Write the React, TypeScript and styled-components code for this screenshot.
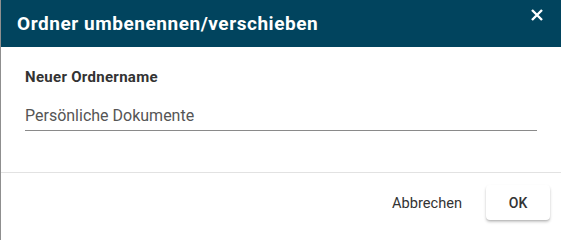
import React, { useState } from "react";
import styled, { createGlobalStyle } from "styled-components";

const GlobalStyle = createGlobalStyle`
  html, body {
    margin: 0;
    padding: 0;
    background: #8f8f8f;
  }
  body {
    font-family: Roboto, "Noto Sans", sans-serif;
    overflow: hidden;
  }
`;

const Backdrop = styled.div`
  padding-left: 1px;
  height: 100vh;
  overflow: hidden;
`;

const Dialog = styled.div`
  background: #fff;
  height: 100%;
  display: flex;
  flex-direction: column;
`;

const Header = styled.div`
  height: 47px;
  flex-shrink: 0;
  background: #01445e;
  display: flex;
  align-items: center;
  justify-content: space-between;
  padding: 0 14px 0 16px;
`;

const Title = styled.h2`
  margin: 0;
  color: #fff;
  font-size: 19px;
  font-weight: 700;
  letter-spacing: 0.55px;
`;

const CloseButton = styled.button`
  align-self: flex-start;
  margin-top: 5px;
  border: none;
  background: transparent;
  padding: 0;
  width: 20px;
  height: 20px;
  display: flex;
  cursor: pointer;
  color: #fff;
`;

const Content = styled.div`
  padding: 20px 24px 41px 24px;
`;

const Label = styled.label`
  display: block;
  font-size: 15px;
  line-height: 20px;
  font-weight: 700;
  letter-spacing: 0.3px;
  color: #333;
`;

const Input = styled.input`
  display: block;
  box-sizing: content-box;
  width: 100%;
  margin-top: 15px;
  padding: 4px 0;
  height: 20px;
  border: none;
  border-bottom: 1px solid #8a8a8a;
  outline: none;
  font-family: Roboto, sans-serif;
  font-size: 16px;
  line-height: 20px;
  color: #555;
  background: transparent;
`;

const Footer = styled.div`
  border-top: 1px solid #e2e2e2;
  display: flex;
  justify-content: flex-end;
  align-items: center;
  gap: 16px;
  padding: 12px 11px 0 0;
`;

const Button = styled.button<{ $raised?: boolean }>`
  font-family: Roboto, sans-serif;
  font-size: ${(p) => (p.$raised ? "14px" : "14.6px")};
  font-weight: ${(p) => (p.$raised ? 500 : 400)};
  color: #333;
  height: 35px;
  min-width: ${(p) => (p.$raised ? "64px" : "auto")};
  padding: 0 8px;
  border: none;
  border-radius: 4px;
  background: #fff;
  cursor: pointer;
  box-shadow: ${(p) =>
    p.$raised
      ? "0 2px 3px rgba(0,0,0,0.22), 0 1px 1px rgba(0,0,0,0.08)"
      : "none"};
`;

const App: React.FC = () => {
  const [name, setName] = useState("Persönliche Dokumente");
  return (
    <>
      <GlobalStyle />
      <Backdrop>
        <Dialog>
          <Header>
            <Title>Ordner umbenennen/verschieben</Title>
            <CloseButton aria-label="Schließen">
              <svg
                width="20"
                height="20"
                viewBox="0 0 24 24"
                fill="none"
                stroke="currentColor"
                strokeWidth="2.9"
              >
                <path d="M6 6L18 18M18 6L6 18" />
              </svg>
            </CloseButton>
          </Header>
          <Content>
            <Label htmlFor="ordnername">Neuer Ordnername</Label>
            <Input
              id="ordnername"
              value={name}
              onChange={(e) => setName(e.target.value)}
            />
          </Content>
          <Footer>
            <Button>Abbrechen</Button>
            <Button $raised>OK</Button>
          </Footer>
        </Dialog>
      </Backdrop>
    </>
  );
};

export default App;
